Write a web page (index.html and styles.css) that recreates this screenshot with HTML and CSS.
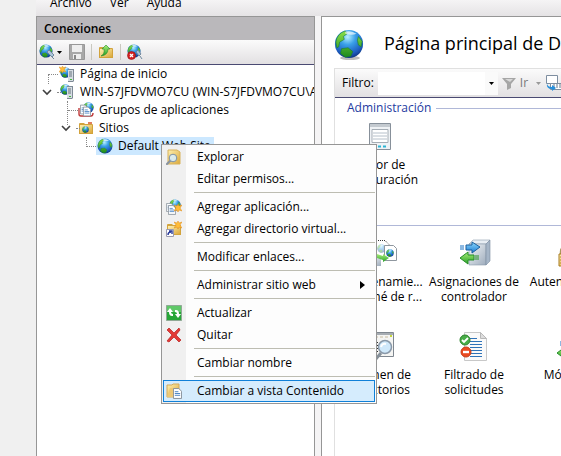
FILE: index.html
```
<!DOCTYPE html>
<html lang="es">
<head>
<meta charset="utf-8">
<title>Administrador de IIS</title>
<link rel="stylesheet" href="styles.css">
</head>
<body>
<svg class="defs" width="0" height="0" aria-hidden="true">
  <defs>
    <radialGradient id="sea" cx=".45" cy=".25" r=".8"><stop offset="0" stop-color="#b8f0ff"/><stop offset=".35" stop-color="#3aa0e8"/><stop offset=".75" stop-color="#1c5cc0"/><stop offset="1" stop-color="#0a2a70"/></radialGradient>
    <linearGradient id="land" x2="0" y2="1"><stop offset="0" stop-color="#8be04a"/><stop offset="1" stop-color="#1c8a1c"/></linearGradient>
    <linearGradient id="gold" x2="1" y2="1"><stop offset="0" stop-color="#fff0b0"/><stop offset="1" stop-color="#dba93c"/></linearGradient>
    <linearGradient id="steel" x2="1" y2="1"><stop offset="0" stop-color="#f4f7fa"/><stop offset="1" stop-color="#9eacbc"/></linearGradient>
    <linearGradient id="blue" x2="0" y2="1"><stop offset="0" stop-color="#8fdcff"/><stop offset="1" stop-color="#1a78d0"/></linearGradient>
    <linearGradient id="green" x2="0" y2="1"><stop offset="0" stop-color="#a8ee78"/><stop offset="1" stop-color="#27a027"/></linearGradient>
  </defs>
  <symbol id="globe" viewBox="0 0 32 32">
    <circle cx="16" cy="16" r="15" fill="url(#sea)"/>
    <path d="M2 14Q3 5 12 2l2 3-4 3 1 3-5 3-1 5-2 1zM8 21l7-1 5 4-2 5-6 1-5-4zM26 8l4 5-1 6-3-2-1-5z" fill="url(#land)" stroke="#177a2a" stroke-width=".6"/>
    <path d="M12 3q6-2 12 2-5 2-12 0z" fill="#fff" opacity=".65"/>
  </symbol>
  <symbol id="server" viewBox="0 0 8 14">
    <path d="M1 1h6v12l-1 1H1z" fill="#7e8a96"/><path d="M1 2h5v11H1z" fill="#d6dde3"/><path d="M2 4h3M2 6h3M2 8h3" stroke="#68747e"/><path d="M3 11h2v1H3z" fill="#46b83c"/>
  </symbol>
  <symbol id="star" viewBox="0 0 8 8"><path d="M4 0l1 2 3-1-2 3 2 3-3-1-1 2-1-2-3 1 2-3-2-3 3 1z" fill="#ffbd38" stroke="#e08a1a" stroke-width=".5"/></symbol>
  <symbol id="folder" viewBox="0 0 16 16"><path d="M1 4q0-1 1-1h4l1 1h7q1 0 1 1v9H1z" fill="#d2a33c"/><path d="M2 5h12v8H2z" fill="url(#gold)"/></symbol>
  <symbol id="page" viewBox="0 0 10 12"><path d="M.5.5h6l3 3v8h-9z" fill="#fff" stroke="#7f8993"/><path d="M2 4h4M2 6h6M2 8h6" stroke="#3d7cc0"/></symbol>
  <symbol id="lens" viewBox="0 0 12 12"><path d="M5 7l-4 4" stroke="#8a94a0" stroke-width="2.2" stroke-linecap="round"/><circle cx="7" cy="5" r="3.8" fill="#d8f0ff" fill-opacity=".85" stroke="#7d90a4"/></symbol>
</svg>

<div class="window">
  <nav class="menubar"><button>Archivo</button><button>Ver</button><button>Ayuda</button></nav>
  <div class="panels">
    <aside class="connections">
      <h2>Conexiones</h2>
      <div class="toolbar">
        <button aria-label="Conectar"><svg width="24" height="16" viewBox="0 0 24 16"><use href="#globe" width="14" height="14"/><path d="M8 8l2-2 5 5-2 2zM12 12l3 3" fill="#a9c4da" stroke="#71899e"/><path d="M18 7h5l-2.500 3z"/></svg></button>
        <button class="save" aria-label="Guardar"><svg width="16" height="16" viewBox="0 0 16 16"><path d="M.5.500h15v15h-15z" fill="#a8a8a8" stroke="#989898"/><path d="M3 1h10v7H3zM4 10h8v5H4z" fill="#eee"/><path d="M5 11h2v4H5z" fill="#888"/></svg></button>
        <span class="divider"></span>
        <button aria-label="Subir"><svg width="16" height="16" viewBox="0 0 16 16"><use href="#folder" width="16" height="16"/><path d="M3 12q4-2 3-7H4l4-4 4 4h-2q0 6-7 7z" fill="url(#green)" stroke="#23892a" stroke-width=".6"/></svg></button>
        <span class="divider"></span>
        <button aria-label="Desconectar"><svg width="16" height="16" viewBox="0 0 16 16"><use href="#globe" width="14" height="14"/><path d="M9 8l2-2 3 4-2 2zM13 12l2 3" fill="#a9c4da" stroke="#71899e"/><circle cx="4.500" cy="11.500" r="4" fill="#d42222" stroke="#941010" stroke-width=".6"/><path d="M3 10l3 3m0-3l-3 3" stroke="#fff" stroke-width="1.300"/></svg></button>
      </div>
      <ul class="tree" role="tree">
        <li class="row level1" role="treeitem"><span class="branch corner"></span><svg width="16" height="16" viewBox="0 0 16 16"><use href="#globe" x="1" y="1" width="11" height="11"/><use href="#server" x="8" y="2" width="8" height="14"/><use href="#star" width="7" height="7"/></svg><span>Página de inicio</span></li>
        <li class="row level1" role="treeitem"><svg class="arrow" width="10" height="10" viewBox="0 0 10 10"><path d="M1 3l4 4 4-4" fill="none" stroke="#404040" stroke-width="1.600"/></svg><span class="branch stub"></span><svg width="16" height="16" viewBox="0 0 16 16"><use href="#globe" x="1" width="11" height="11"/><use href="#server" x="7" y="1" width="8" height="14"/></svg><span>WIN-S7JFDVMO7CU (WIN-S7JFDVMO7CU\Administrador)</span></li>
        <li class="row level2" role="treeitem"><span class="branch tee"></span><svg width="16" height="16" viewBox="0 0 16 16"><use href="#globe" x="5" width="11" height="11"/><path d="M1 6v6q0 2 2 2h10q2 0 2-3" fill="none" stroke="#c03a3a" stroke-width="1.400"/><use href="#page" x="2" y="2" width="8" height="11"/><use href="#page" x="5" y="4" width="8" height="11"/></svg><span>Grupos de aplicaciones</span></li>
        <li class="row level2" role="treeitem"><svg class="arrow" width="10" height="10" viewBox="0 0 10 10"><path d="M1 3l4 4 4-4" fill="none" stroke="#404040" stroke-width="1.600"/></svg><span class="branch stub"></span><svg width="16" height="16" viewBox="0 0 16 16"><use href="#folder" width="16" height="16"/><use href="#globe" x="4" y="6" width="7" height="7"/><path d="M10 3h4" stroke="#d4542a" stroke-width="1.500"/></svg><span>Sitios</span></li>
        <li class="row level3" role="treeitem" aria-selected="true"><span class="branch elbow"></span><span class="selected"><svg width="16" height="16"><use href="#globe" width="16" height="16"/></svg><span>Default Web Site</span></span></li>
      </ul>
    </aside>

    <main class="content">
      <header class="title"><svg width="30" height="32" viewBox="0 0 30 32"><ellipse cx="16" cy="29" rx="10" ry="2" fill="#bbb"/><use href="#globe" width="30" height="30"/></svg><h1>Página principal de Default Web Site</h1></header>
      <section class="features">
        <div class="filter">
          <label for="filter">Filtro:</label>
          <span class="combo"><input id="filter" type="text"><button aria-label="Desplegar filtros"><svg width="5" height="3"><path d="M0 0h5L2.500 3z"/></svg></button></span>
          <button class="go" disabled><svg width="14" height="13" viewBox="0 0 14 13"><path d="M0 1h14L9 7v4l-4 2V7z" fill="#a6a6a6"/><path d="M3 2h8L8 5z" fill="#d8d8d8"/></svg>Ir</button>
          <button class="drop" aria-label="Opciones de filtro" disabled><svg width="5" height="3"><path d="M0 0h5L2.500 3z" fill="#999"/></svg></button>
          <button aria-label="Mostrar todos"><svg width="16" height="16" viewBox="0 0 16 16"><path d="M.5.500h11v8H.5z" fill="#fff" stroke="#7e8ea0"/><path d="M4.500 8.500h11v6h-11z" fill="#fff" stroke="#7e8ea0"/><path d="M7 10h8M7 12h8" stroke="#66788c" stroke-dasharray="2 1"/><path d="M1 8q0 4 5 4v-2l4 3-4 3v-2Q0 14 1 8z" fill="#268fdb"/></svg></button>
        </div>
        <h3 class="group">Administración</h3>
        <div class="grid">
          <a href="#" class="feature"><svg width="32" height="32" viewBox="0 0 32 32"><path d="M5.500 2.500h21v26h-21z" fill="#eff2f5" stroke="#87909a"/><path d="M6 3h20v3H6z" fill="#c4cad0"/><path d="M8 8.500h16v13H8z" fill="#fff" stroke="#a5adb5"/><path d="M9 12h14M9 15h14M9 18h14" stroke="#b6c0ca"/><path d="M9 25.500h14" stroke="#2cb4d4" stroke-width="2" stroke-dasharray="3 2"/></svg><span>Editor de<br>configuración</span></a>
        </div>
        <h3 class="group bare"></h3>
        <div class="grid">
          <a href="#" class="feature"><svg width="32" height="32" viewBox="0 0 32 32"><path d="M4 2.500h17l4 4" fill="none" stroke="#333" stroke-dasharray="1 1"/><path d="M4 20h13v8H4z" fill="url(#steel)"/><use href="#globe" x="13" y="6" width="9" height="9" opacity=".4"/><path d="M20.500 7.500h9l3 3v12h-12z" fill="#fff" stroke="#8f979f"/><use href="#globe" x="22" y="11" width="8" height="8"/><path d="M13 16l6 2v-2l6 4-6 4v-2l-6-2z" fill="url(#green)"/></svg><span>Almacenamie...<br>en caché de r...</span></a>
          <a href="#" class="feature"><svg width="32" height="32" viewBox="0 0 32 32"><path d="M11 6l4-4h17l-4 4z" fill="#e8eef4" stroke="#8a9aac" stroke-width=".6"/><path d="M11 6h17v21H11z" fill="url(#steel)" stroke="#8a9aac" stroke-width=".6"/><path d="M28 6l4-4v21l-4 4z" fill="#a5b5c7" stroke="#7a8ca0" stroke-width=".6"/><path d="M8 7v5h6v3l8-6-8-5v3z" fill="url(#blue)" stroke="#1b5f9e"/><path d="M3 7v5M5 7v5" stroke="#1b72c4"/><path d="M16 17v5h-6v4l-8-6 8-6v3z" fill="url(#green)" stroke="#248d28"/><path d="M18 17v5M20 17v5" stroke="#279427"/></svg><span>Asignaciones de<br>controlador</span></a>
          <a href="#" class="feature"><svg width="32" height="32" viewBox="0 0 32 32"><path d="M9 17v-3q0-5 5-5t5 5v3" fill="none" stroke="#a9965c" stroke-width="2.500"/><path d="M7 16h15v12H7z" fill="url(#gold)" stroke="#a67b20"/><path d="M8 19h13M8 22h13M8 25h13" stroke="#b58a2a"/></svg><span>Autenticación<br>&nbsp;</span></a>
          <a href="#" class="feature"><svg width="32" height="32" viewBox="0 0 32 32"><path d="M3.500 1.500h26v24h-26z" fill="#f5f5f3" stroke="#7f8790"/><path d="M4 2h25v2H4z" fill="#a7adb3"/><path d="M26 4h2v2h-2z" fill="#c5d73c"/><path d="M6 6h18" stroke="#c8bca0" stroke-dasharray="3 2"/><path d="M8 11.500h6M8 14.500h6M8 17.500h6M8 20.500h6" stroke="#333"/><path d="M17 22l-6 7" stroke="#858f99" stroke-width="3"/><circle cx="21" cy="16" r="6.500" fill="#cfe8fa" stroke="#8998a8" stroke-width="1.500"/><path d="M17 16q1-4 5-3" fill="none" stroke="#fff" stroke-width="2"/></svg><span>Examen de<br>directorios</span></a>
          <a href="#" class="feature"><svg width="32" height="32" viewBox="0 0 32 32"><path d="M6.500 1.500h16l6 6v22h-22z" fill="#fafafa" stroke="#c8c8c8"/><path d="M22.500 1.500v6h6z" fill="#ddd" stroke="#b8b8b8"/><path d="M12 7.500h7M12 10.500h12M12 13.500h12M12 16.500h12M12 19.500h12M12 22.500h12M12 25.500h12" stroke="#2f73b8"/><circle cx="7" cy="9" r="5" fill="#48ad48" stroke="#2b822b"/><path d="M4 9l2 2 4-4" fill="none" stroke="#fff" stroke-width="1.800"/><circle cx="8" cy="21" r="5" fill="#ea4a20" stroke="#c53d18"/><path d="M5 21h6" stroke="#fff" stroke-width="2.400"/></svg><span>Filtrado de<br>solicitudes</span></a>
          <a href="#" class="feature"><svg width="32" height="32" viewBox="0 0 32 32"><path d="M14 8h14v19H14z" fill="url(#steel)"/><path d="M9 10v5M11 10v5" stroke="#1b72c4"/><path d="M13 10v5h5v3l7-6-7-5v3z" fill="url(#blue)"/><path d="M20 19v6h-7v3l-8-6 8-6v3z" fill="url(#green)" stroke="#248d28"/></svg><span>Módulos<br>&nbsp;</span></a>
        </div>
      </section>
    </main>
  </div>
</div>

<menu class="context">
  <li><button><svg width="16" height="16" viewBox="0 0 16 16"><path d="M2 1h9l3 2v12H2z" fill="url(#gold)" stroke="#d8b25a"/><use href="#lens" y="4" width="12" height="12"/></svg>Explorar</button></li>
  <li><button><i></i>Editar permisos...</button></li>
  <li class="line"></li>
  <li><button><svg width="16" height="16" viewBox="0 0 16 16"><use href="#globe" x="3" width="12" height="12"/><use href="#page" x="0" y="4" width="8" height="9"/><use href="#page" x="2" y="6" width="8" height="10"/><use href="#star" x="8" y="5" width="8" height="8"/></svg>Agregar aplicación...</button></li>
  <li><button><svg width="16" height="16" viewBox="0 0 16 16"><use href="#folder" width="16" height="16"/><use href="#star" x="8" width="8" height="8"/><path d="M.5 8.500h7v7h-7z" fill="#fff" stroke="#9a9ab0"/><path d="M2 14q0-3 3-3M3 10h3v3" fill="none" stroke="#283a9a" stroke-width="1.400"/></svg>Agregar directorio virtual...</button></li>
  <li class="line"></li>
  <li><button><i></i>Modificar enlaces...</button></li>
  <li class="line"></li>
  <li><button><i></i>Administrar sitio web<svg class="more" width="5" height="8"><path d="M0 0l5 4-5 4z"/></svg></button></li>
  <li class="line"></li>
  <li><button><svg width="16" height="16" viewBox="0 0 16 16"><path d="M.5.500h15v15H.5z" fill="#27a637" stroke="#8fa995"/><path d="M1 1h14v6H1z" fill="#5fc868"/><path d="M7 11H6q-3 0-3-4H1l3-4 3 4H5q0 2 2 2zM9 5h1q3 0 3 4h2l-3 4-3-4h2q0-2-2-2z" fill="#fff"/></svg>Actualizar</button></li>
  <li><button><svg width="16" height="16" viewBox="0 0 16 16"><path d="M1 3l2-2 5 5 5-5 1 2-4 5 5 5-2 2-5-5-5 5-2-1 5-6z" fill="#e33b36" stroke="#b81e1e" stroke-width=".7"/></svg>Quitar</button></li>
  <li class="line"></li>
  <li><button><i></i>Cambiar nombre</button></li>
  <li class="line"></li>
  <li><button class="active"><svg width="16" height="16" viewBox="0 0 16 16"><path d="M1 2h5l1-1h6v13H1z" fill="url(#gold)" stroke="#d2a95a"/><path d="M1 14l3-9h10l-3 9z" fill="#edc875"/><use href="#page" x="7" y="5" width="9" height="11"/></svg>Cambiar a vista Contenido</button></li>
</menu>
</body>
</html>
```
FILE: styles.css
```
* { box-sizing: border-box; }
body {
  margin: 0;
  padding-left: 36px;
  min-height: 100vh;
  overflow: hidden;
  background: #f0f0f0;
  color: #000;
  font: 12px/16px "Open Sans", "Noto Sans", sans-serif;
}
button, input { font: inherit; color: inherit; border: 0; padding: 0; background: none; }
button { display: flex; align-items: center; }
h1, h2, h3, ul, menu { margin: 0; padding: 0; font-weight: 400; list-style: none; }
svg { display: block; flex: none; overflow: visible; }
.defs { position: absolute; }

.window { display: flex; flex-direction: column; height: 100vh; background: #f5f4f5; }
.menubar {
  display: flex;
  align-items: flex-end;
  gap: 18px;
  height: 16px;
  padding: 0 14px 5px;
  background: linear-gradient(#f5f4f5, #e5e3e5);
}
.panels { display: flex; flex: 1; gap: 6px; min-height: 0; }

.connections { width: 279px; flex: none; overflow: hidden; background: #fff; border: solid #969696; border-width: 1px 1px 0; }
.connections h2 { height: 23px; padding-left: 7px; background: #bab8bb; font-size: 12px; line-height: 23px; font-weight: 600; }
.toolbar {
  display: flex;
  align-items: center;
  height: 25px;
  gap: 6px;
  padding-left: 2px;
  background: linear-gradient(#fbfbfb, #e2e0e2);
  border-bottom: 1px solid #4a4a72;
}
.toolbar .divider { width: 1px; height: 16px; background: #c9c8bf; }
.row { display: flex; align-items: center; height: 18px; white-space: nowrap; gap: 5px; position: relative; }
.level1 { padding-left: 22px; }
.level2 { padding-left: 41px; }
.level3 { padding-left: 59px; }
.branch { position: absolute; height: 10px; width: 10px; border: 0 dotted #888; }
.corner { left: 11px; top: 9px; border-width: 1px 0 0 1px; }
.stub { left: 20px; top: 9px; width: 4px; border-top-width: 1px; }
.level2 .stub { left: 39px; }
.tee { left: 30px; top: 0; height: 24px; border-left-width: 1px; }
.tee::after { content: ""; display: block; width: 10px; margin-top: 9px; border-top: 1px dotted #888; }
.elbow { left: 49px; top: 0; border-width: 0 0 1px 1px; }
.arrow { position: absolute; left: 5px; }
.level2 .arrow { left: 24px; }
.selected { display: flex; align-items: center; gap: 5px; height: 18px; padding: 0 3px 0 1px; background: #cce8ff; }

.content { flex: 1; min-width: 0; overflow: hidden; padding-left: 12px; background: #fff; border: solid #969696; border-width: 1px 0 0 1px; }
.title { display: flex; align-items: center; gap: 20px; height: 51px; padding-top: 4px; white-space: nowrap; }
.title h1 { font-size: 18px; line-height: 24px; padding-bottom: 4px; }
.features { height: 100%; border: solid #e0e0e0; border-width: 1px 0 0 1px; }
.filter {
  display: flex;
  align-items: center;
  height: 29px;
  padding-left: 7px;
  gap: 4px;
  background: linear-gradient(#fbfbfb, #e2e0e2);
  border-bottom: 1px solid #4a4a72;
}
.filter > * { flex: none; }
.combo { display: flex; height: 23px; width: 120px; background: #fff; }
.combo input { flex: 1; min-width: 0; }
.combo button { width: 13px; justify-content: center; background: #fafafa; padding: 0; }
.go { gap: 4px; color: #777; }
.drop { padding: 0 1px 0 4px; }
.group { display: flex; align-items: center; gap: 5px; height: 20px; padding-left: 12px; color: #1e3b9f; font-size: 12px; }
.group::after { content: ""; flex: 1; height: 1px; background: #b0b8d8; }
.grid { display: grid; grid-template-columns: repeat(3, 94px); grid-auto-rows: 93px; padding-top: 3px; margin-left: -2px; }
.grid + .group { margin-top: 1px; }
.feature { display: flex; flex-direction: column; align-items: center; gap: 4px; color: inherit; text-align: center; text-decoration: none; line-height: 15px; white-space: nowrap; }

.context {
  position: absolute;
  left: 161px;
  top: 144px;
  width: 216px;
  padding: 1px;
  border: 1px solid #969696;
  background: linear-gradient(90deg, #f0f0f0 24px, #fdfdfd 24px);
}
.context button { width: 100%; height: 22px; gap: 15px; padding-left: 2px; border: 1px solid transparent; }
.context i { width: 16px; }
.context .active { background: #d5ecfd; border-color: #1080d8; }
.context .line { height: 6px; padding: 2px 0 0 31px; }
.context .line::before { content: ""; display: block; height: 1px; background: #bdbdb2; }
.more { margin-left: auto; margin-right: 9px; }
```
